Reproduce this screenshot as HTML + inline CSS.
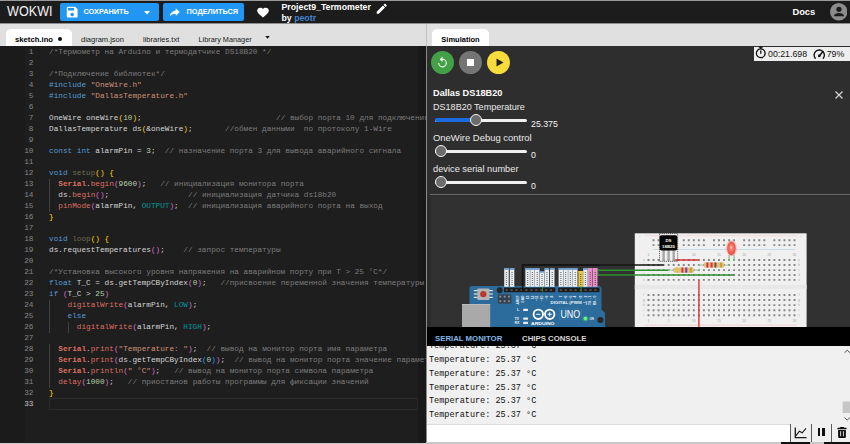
<!DOCTYPE html>
<html lang="ru">
<head>
<meta charset="utf-8">
<title>Project9_Termometer - Wokwi</title>
<style>
*{box-sizing:border-box;margin:0;padding:0}
html,body{width:850px;height:444px;overflow:hidden;background:#1e1e1e;font-family:"Liberation Sans",sans-serif}
.a{position:absolute;white-space:nowrap}
#hdr{position:absolute;left:0;top:0;width:850px;height:24px;background:#1c1c1c;color:#fff}
.btn{position:absolute;top:3px;height:18px;background:#2196f3;border-radius:2px}
.btn span{position:absolute;top:0;color:#fff;font-weight:bold;font-size:7.35px;line-height:18px;white-space:nowrap}
#tabsL{position:absolute;left:0;top:24px;width:426px;height:22px;background:#e0e0e0}
#tabsR{position:absolute;left:427px;top:24px;width:423px;height:22px;background:#e0e0e0}
.tab{position:absolute;top:5px;height:17px;font-size:7.5px;line-height:21px;color:#1a1a1a;white-space:nowrap}
.tab.act{background:#fff;border-radius:5px 5px 0 0;font-weight:bold;color:#000}
#ed{position:absolute;left:0;top:46px;width:426px;height:398px;background:#1e1e1e;overflow:hidden}
#ed .ln{position:absolute;left:0;width:33.5px;text-align:right;color:#858585;font:7.72px/11px "Liberation Mono",monospace;height:11px}
#ed .cl{position:absolute;left:49px;color:#d4d4d4;font:7.72px/11px "Liberation Mono",monospace;height:11px;white-space:pre}
#ed .ig{position:absolute;width:1px;background:#404040}
.c{color:#7c7c7c}.k{color:#569cd6}.s{color:#ce9178}.n{color:#b5cea8}.f{color:#dd6f60}.fb{color:#dd6f60;font-weight:bold}.t{color:#00979c}.m{color:#6e6c52}.y{color:#ffd700}.p{color:#da70d6}.b3{color:#179fff}
#split{position:absolute;left:426px;top:24px;width:1px;height:420px;background:#8a8a8a}
#sim{position:absolute;left:427px;top:46px;width:423px;height:281px;background:#2e2e2e;overflow:hidden}
.cb{position:absolute;top:4.800px;width:23px;height:23px;border-radius:50%}
#timer{position:absolute;left:327px;top:0.700px;width:96px;height:14.200px;background:#eeeeee;color:#111;font-size:8.8px;line-height:14.600px}
#chip{position:absolute;left:0;top:34px;width:423px;height:116px;background:#2e2e2e;color:#fff}
#chip:after{content:"";position:absolute;left:2.500px;right:0;bottom:1px;height:1px;background:#6a6a6a}
.lbl{position:absolute;left:6px;font-size:9.2px;line-height:12px;white-space:nowrap;color:#eaeaea}
.trk{position:absolute;left:8px;width:92px;height:3px;border-radius:2px;background:#efefef}
.fill{position:absolute;left:0;top:-0.300px;height:3.600px;border-radius:2px;background:#1a6ae0}
.thb{position:absolute;top:-4.5px;width:12px;height:12px;border-radius:50%;background:#6c6c6c;border:1.4px solid #f4f4f4}
.val{position:absolute;left:104px;font-size:8.8px;line-height:10px;color:#f4f4f4}
#canvas{position:absolute;left:0;top:150px;width:423px;height:131px;background:#313131;overflow:hidden}
#sbar{position:absolute;left:427px;top:327px;width:423px;height:19px;background:#000}
#sbar span{position:absolute;top:1.500px;font-weight:bold;font-size:7.8px;line-height:20px;white-space:nowrap}
#ser{position:absolute;left:427px;top:346px;width:423px;height:77.500px;background:#f0f0f0;overflow:hidden}
#ser div{position:absolute;left:2px;font:8.53px/13.9px "Liberation Mono",monospace;color:#101010;white-space:pre}
#inp{position:absolute;left:427px;top:423.500px;width:423px;height:18.500px;background:#f0f0f0}
#bot{position:absolute;left:0;top:442px;width:850px;height:2px;background:#c8c8c8}
</style>
</head>
<body>
<div id="hdr">
  <div class="a" style="left:0;top:0;width:850px;height:1px;background:#9a9a9a"></div><div class="a" style="left:0;top:23px;width:850px;height:1px;background:#8e8e8e"></div>
  <svg class="a" style="left:6px;top:3px" width="50" height="18" viewBox="0 0 50 18"><text x="1.100" y="12.500" font-family="Liberation Sans, sans-serif" font-size="13.800" fill="#f2f2f2" textLength="45.400" lengthAdjust="spacingAndGlyphs">WOKWI</text></svg>
  <div class="btn" style="left:60px;width:98.5px">
    <svg class="a" style="left:4.600px;top:2.200px" width="14.400" height="14.400" viewBox="0 0 24 24"><path fill="#fff" d="M15 9H5V5h10m-3 14a3 3 0 0 1-3-3 3 3 0 0 1 3-3 3 3 0 0 1 3 3 3 3 0 0 1-3 3m5-16H5a2 2 0 0 0-2 2v14a2 2 0 0 0 2 2h14a2 2 0 0 0 2-2V7l-4-4z"/></svg>
    <span style="left:23.5px">СОХРАНИТЬ</span>
    <svg class="a" style="left:84px;top:7.5px" width="6" height="4" viewBox="0 0 6 4"><path d="M0 0h6L3 3.6z" fill="#fff"/></svg>
  </div>
  <div class="btn" style="left:163px;width:81px">
    <svg class="a" style="left:5.300px;top:2.900px" width="13.300" height="13.300" viewBox="0 0 24 24"><path fill="#fff" d="M21 11l-7-7v4C7 9 4 14 3 19c2.500-3.500 6-5.100 11-5.100V18l7-7z"/></svg>
    <span style="left:23.500px">ПОДЕЛИТЬСЯ</span>
  </div>
  <svg class="a" style="left:255.500px;top:5.5px" width="14" height="13" viewBox="0 0 24 24" preserveAspectRatio="none"><path fill="#fff" d="M12 21.350l-1.450-1.320C5.400 15.360 2 12.270 2 8.500 2 5.410 4.420 3 7.500 3c1.740 0 3.410.810 4.500 2.080C13.090 3.810 14.760 3 16.500 3 19.580 3 22 5.410 22 8.500c0 3.770-3.400 6.860-8.550 11.530L12 21.350z"/></svg>
  <div class="a" style="left:281.5px;top:1.5px;font-size:8.75px;line-height:11px;font-weight:bold;color:#fff">Project9_Termometer</div>
  <div class="a" style="left:281.5px;top:12.5px;font-size:8.75px;line-height:11px;font-weight:bold;color:#fff">by <span style="color:#3f86cf">peotr</span></div>
  <svg class="a" style="left:374.500px;top:1.500px" width="13.500" height="13.500" viewBox="0 0 24 24"><path fill="#fff" d="M20.710 7.040c.390-.390.390-1.040 0-1.410l-2.340-2.340c-.370-.390-1.020-.390-1.410 0l-1.840 1.830 3.750 3.750M3 17.250V21h3.750L17.810 9.930l-3.750-3.750L3 17.250z"/></svg>
  <div class="a" style="left:792.400px;top:7.200px;font-size:9.350px;line-height:11px;font-weight:bold;color:#fff">Docs</div>
  <svg class="a" style="left:829.700px;top:3.200px" width="17.500" height="17.500" viewBox="0 0 24 24"><circle cx="12" cy="12" r="12" fill="#8c8c8c"/><circle cx="12.300" cy="8.600" r="3.600" fill="#1c1c1c"/><path fill="#1c1c1c" d="M5.400 18.200c0-3 3.400-4.400 6.900-4.400s6.900 1.400 6.900 4.400z"/></svg>
</div>
<div id="tabsL">
  <div class="tab act" style="left:5.5px;width:66.500px"><span class="a" style="left:9.500px;font-size:7.700px">sketch.ino</span><span class="a" style="left:52.600px;top:8.100px;width:4.400px;height:4.400px;border-radius:50%;background:#111"></span></div>
  <div class="tab" style="left:81px">diagram.json</div>
  <div class="tab" style="left:143px">libraries.txt</div>
  <div class="tab" style="left:198.500px;font-size:7.300px">Library Manager</div>
  <svg class="a" style="left:264.500px;top:12px" width="5" height="3" viewBox="0 0 6 4"><path d="M0 0h6L3 3.600z" fill="#111"/></svg>
</div>
<div id="tabsR">
  <div class="tab act" style="left:4.800px;width:57px"><span class="a" style="left:9.500px;top:-0.500px">Simulation</span></div>
</div>
<div id="ed">
<div class="a" style="left:0;top:0;width:25px;height:398px;background:#1b1b1b"></div>
<div class="a" style="left:417.500px;top:0;width:9px;height:398px;background:#191919"></div>
<div id="code" style="position:absolute;left:0;top:0;width:426px;height:398px">
<div class="ln" style="top:0.75px">1</div><div class="cl" style="top:0.75px"><span class="c">/*Термометр на Arduino и термодатчике DS18B20 */</span></div>
<div class="ln" style="top:11.75px">2</div><div class="cl" style="top:11.75px"></div>
<div class="ln" style="top:22.75px">3</div><div class="cl" style="top:22.75px"><span class="c">/*Подключение библиотек*/</span></div>
<div class="ln" style="top:33.75px">4</div><div class="cl" style="top:33.75px"><span class="k">#include</span> <span class="s">"OneWire.h"</span></div>
<div class="ln" style="top:44.75px">5</div><div class="cl" style="top:44.75px"><span class="k">#include</span> <span class="s">"DallasTemperature.h"</span></div>
<div class="ln" style="top:55.75px">6</div><div class="cl" style="top:55.75px"></div>
<div class="ln" style="top:66.75px">7</div><div class="cl" style="top:66.75px">OneWire oneWire<span class="y">(</span><span class="n">10</span><span class="y">)</span>;                             <span class="c">// выбор порта 10 для подключения датчика</span></div>
<div class="ln" style="top:77.75px">8</div><div class="cl" style="top:77.75px">DallasTemperature ds<span class="y">(</span>&amp;oneWire<span class="y">)</span>;       <span class="c">//обмен данными  по протоколу 1-Wire</span></div>
<div class="ln" style="top:88.75px">9</div><div class="cl" style="top:88.75px"></div>
<div class="ln" style="top:99.75px">10</div><div class="cl" style="top:99.75px"><span class="k">const</span> <span class="k">int</span> alarmPin = <span class="n">3</span>;  <span class="c">// назначение порта 3 для вывода аварийного сигнала</span></div>
<div class="ln" style="top:110.75px">11</div><div class="cl" style="top:110.75px"></div>
<div class="ln" style="top:121.75px">12</div><div class="cl" style="top:121.75px"><span class="k">void</span> <span class="m">setup</span><span class="y">()</span> <span class="y">{</span></div>
<div class="ln" style="top:132.75px">13</div><div class="cl" style="top:132.75px">  <span class="fb">Serial</span>.<span class="f">begin</span><span class="p">(</span><span class="n">9600</span><span class="p">)</span>;   <span class="c">// инициализация монитора порта</span></div>
<div class="ln" style="top:143.75px">14</div><div class="cl" style="top:143.75px">  ds.<span class="f">begin</span><span class="p">()</span>;                 <span class="c">// инициализация датчика ds18b20</span></div>
<div class="ln" style="top:154.75px">15</div><div class="cl" style="top:154.75px">  <span class="f">pinMode</span><span class="p">(</span>alarmPin, <span class="t">OUTPUT</span><span class="p">)</span>;  <span class="c">// инициализация аварийного порта на выход</span></div>
<div class="ln" style="top:165.75px">16</div><div class="cl" style="top:165.75px"><span class="y">}</span></div>
<div class="ln" style="top:176.75px">17</div><div class="cl" style="top:176.75px"></div>
<div class="ln" style="top:187.75px">18</div><div class="cl" style="top:187.75px"><span class="k">void</span> <span class="m">loop</span><span class="y">()</span> <span class="y">{</span></div>
<div class="ln" style="top:198.75px">19</div><div class="cl" style="top:198.75px">ds.requestTemperatures<span class="p">()</span>;    <span class="c">// запрос температуры</span></div>
<div class="ln" style="top:209.75px">20</div><div class="cl" style="top:209.75px"></div>
<div class="ln" style="top:220.75px">21</div><div class="cl" style="top:220.75px"><span class="c">/*Установка высокого уровня напряжения на аварийном порту при T &gt; 25 °C*/</span></div>
<div class="ln" style="top:231.75px">22</div><div class="cl" style="top:231.75px"><span class="k">float</span> T_C = ds.getTempCByIndex<span class="p">(</span><span class="n">0</span><span class="p">)</span>;   <span class="c">//присвоение переменной значения температуры</span></div>
<div class="ln" style="top:242.75px">23</div><div class="cl" style="top:242.75px"><span class="k">if</span> <span class="p">(</span>T_C &gt; <span class="n">25</span><span class="p">)</span></div>
<div class="ln" style="top:253.75px">24</div><div class="cl" style="top:253.75px">    <span class="f">digitalWrite</span><span class="p">(</span>alarmPin, <span class="t">LOW</span><span class="p">)</span>;</div>
<div class="ln" style="top:264.75px">25</div><div class="cl" style="top:264.75px">    <span class="k">else</span></div>
<div class="ln" style="top:275.75px">26</div><div class="cl" style="top:275.75px">      <span class="f">digitalWrite</span><span class="p">(</span>alarmPin, <span class="t">HIGH</span><span class="p">)</span>;</div>
<div class="ln" style="top:286.75px">27</div><div class="cl" style="top:286.75px"></div>
<div class="ln" style="top:297.75px">28</div><div class="cl" style="top:297.75px">  <span class="fb">Serial</span>.<span class="f">print</span><span class="p">(</span><span class="s">"Temperature: "</span><span class="p">)</span>;  <span class="c">// вывод на монитор порта имя параметра</span></div>
<div class="ln" style="top:308.75px">29</div><div class="cl" style="top:308.75px">  <span class="fb">Serial</span>.<span class="f">print</span><span class="p">(</span>ds.getTempCByIndex<span class="b3">(</span><span class="n">0</span><span class="b3">)</span><span class="p">)</span>;  <span class="c">// вывод на монитор порта значение параметра</span></div>
<div class="ln" style="top:319.75px">30</div><div class="cl" style="top:319.75px">  <span class="fb">Serial</span>.<span class="f">println</span><span class="p">(</span><span class="s">" °C"</span><span class="p">)</span>;   <span class="c">// вывод на монитор порта символа параметра</span></div>
<div class="ln" style="top:330.75px">31</div><div class="cl" style="top:330.75px">  <span class="f">delay</span><span class="p">(</span><span class="n">1000</span><span class="p">)</span>;   <span class="c">// приостанов работы программы для фиксации значений</span></div>
<div class="ln" style="top:341.75px">32</div><div class="cl" style="top:341.75px"><span class="y">}</span></div>
<div class="ln" style="top:352.75px;color:#c6c6c6">33</div><div class="cl" style="top:352.75px"></div>
<div class="ig" style="left:49.00px;top:132.75px;height:33.00px"></div>
<div class="ig" style="left:49.00px;top:253.75px;height:33.00px"></div>
<div class="ig" style="left:67.53px;top:275.75px;height:11.00px"></div>
<div class="ig" style="left:49.00px;top:297.75px;height:44.00px"></div>
</div>
<div class="a" style="left:49px;top:352px;width:369px;height:12px;border:1px solid #292929"></div>
</div>
<div id="split"><div class="a" style="left:0;top:0;width:1px;height:22px;background:#c2c2c2"></div></div>
<div id="sim">
  <div class="cb" style="left:4px;background:#43a047"><svg class="a" style="left:5px;top:5px" width="13" height="13" viewBox="0 0 24 24"><path fill="#fff" d="M12 5V1L7 6l5 5V7a6 6 0 0 1 6 6 6 6 0 0 1-6 6 6 6 0 0 1-6-6H4a8 8 0 0 0 8 8 8 8 0 0 0 8-8 8 8 0 0 0-8-8z"/></svg></div>
  <div class="cb" style="left:32px;background:#757575"><div class="a" style="left:8px;top:8px;width:7px;height:7px;background:#fff"></div></div>
  <div class="cb" style="left:60px;background:#f7dc3c"><svg class="a" style="left:8.5px;top:7px" width="8" height="9" viewBox="0 0 8 9"><path d="M0.500 0.500L7.500 4.500L0.500 8.500z" fill="#222"/></svg></div>
  <div id="timer">
    <svg class="a" style="left:1.300px;top:-0.300px" width="11.500" height="12.800" viewBox="0 0 23 25.600"><circle cx="11.500" cy="14.600" r="8.800" fill="none" stroke="#111" stroke-width="2.600"/><path d="M7.500 2.200h8M11.500 2.200v4M11.500 9v6.500" stroke="#111" stroke-width="2.600" fill="none"/></svg>
    <span class="a" style="left:14px;top:0">00:21.698</span>
    <svg class="a" style="left:59px;top:2px" width="12.500" height="10.500" viewBox="0 0 25 21"><path d="M5.200 19.500A10.300 10.300 0 1 1 19.800 19.500" fill="none" stroke="#111" stroke-width="2.700"/><path d="M12.500 13.800L19.500 5.300" stroke="#111" stroke-width="3" stroke-linecap="round"/><circle cx="12.500" cy="13.800" r="2.600" fill="#111"/></svg>
    <span class="a" style="left:72.700px;top:0">79%</span>
  </div>
  <div id="chip">
    <div class="lbl" style="top:7px;font-weight:bold;color:#fff">Dallas DS18B20</div>
    <svg class="a" style="left:407.500px;top:10.600px" width="8" height="8" viewBox="0 0 8 8"><path d="M0.500 0.500L7.500 7.500M7.500 0.500L0.500 7.500" stroke="#d4d4d4" stroke-width="1.200" fill="none"/></svg>
    <div class="lbl" style="top:20.500px;font-size:9.06px">DS18B20 Temperature</div>
    <div class="trk" style="top:38.700px"><div class="fill" style="width:42px"></div><div class="thb" style="left:34.500px"></div></div>
    <div class="val" style="top:38.500px">25.375</div>
    <div class="lbl" style="top:51.600px;font-size:9.45px">OneWire Debug control</div>
    <div class="trk" style="top:69.500px"><div class="thb" style="left:-0.500px"></div></div>
    <div class="val" style="top:70px">0</div>
    <div class="lbl" style="top:83px;font-size:9.27px">device serial number</div>
    <div class="trk" style="top:100.800px"><div class="thb" style="left:-0.500px"></div></div>
    <div class="val" style="top:101px">0</div>
  </div>
  <div id="canvas">
  <svg class="a" style="left:0;top:0" width="423" height="131" viewBox="427 196 423 131" font-family="Liberation Sans, sans-serif">
<defs>
<pattern id="h" x="647.650" y="0" width="5.035" height="5" patternUnits="userSpaceOnUse"><rect x="0" y="0" width="1.7" height="1.7" fill="#8f8f8f"/></pattern>
<radialGradient id="lg" cx="0.48" cy="0.45" r="0.6"><stop offset="0" stop-color="#ffe4de"/><stop offset="0.3" stop-color="#f47a6a"/><stop offset="1" stop-color="#e8443a"/></radialGradient>
</defs>
<rect x="427" y="196" width="4" height="131" fill="#2c2c2c"/>
<g>
<rect x="634.8" y="233.3" width="171.8" height="100" fill="#f0f0f0"/>
<rect x="634.8" y="284.8" width="171.8" height="4.2" fill="#e8e8e8"/>
<rect x="645" y="235.5" width="152" height="0.6" fill="#f3cccc"/>
<rect x="653" y="249" width="142" height="0.6" fill="#a9cfe8"/>
<rect x="645" y="324.8" width="152" height="0.6" fill="#f3bcbc"/>
<path fill="#858585" d="M652.58 239.35h1.9v1.9h-1.9zM657.62 239.35h1.9v1.9h-1.9zM662.65 239.35h1.9v1.9h-1.9zM667.69 239.35h1.9v1.9h-1.9zM672.72 239.35h1.9v1.9h-1.9zM682.79 239.35h1.9v1.9h-1.9zM687.83 239.35h1.9v1.9h-1.9zM692.87 239.35h1.9v1.9h-1.9zM697.90 239.35h1.9v1.9h-1.9zM702.93 239.35h1.9v1.9h-1.9zM713.00 239.35h1.9v1.9h-1.9zM718.04 239.35h1.9v1.9h-1.9zM723.07 239.35h1.9v1.9h-1.9zM728.11 239.35h1.9v1.9h-1.9zM733.14 239.35h1.9v1.9h-1.9zM743.21 239.35h1.9v1.9h-1.9zM748.25 239.35h1.9v1.9h-1.9zM753.28 239.35h1.9v1.9h-1.9zM758.32 239.35h1.9v1.9h-1.9zM763.36 239.35h1.9v1.9h-1.9zM773.42 239.35h1.9v1.9h-1.9zM778.46 239.35h1.9v1.9h-1.9zM783.49 239.35h1.9v1.9h-1.9zM788.53 239.35h1.9v1.9h-1.9zM793.56 239.35h1.9v1.9h-1.9zM652.58 244.15h1.9v1.9h-1.9zM657.62 244.15h1.9v1.9h-1.9zM662.65 244.15h1.9v1.9h-1.9zM667.69 244.15h1.9v1.9h-1.9zM672.72 244.15h1.9v1.9h-1.9zM682.79 244.15h1.9v1.9h-1.9zM687.83 244.15h1.9v1.9h-1.9zM692.87 244.15h1.9v1.9h-1.9zM697.90 244.15h1.9v1.9h-1.9zM702.93 244.15h1.9v1.9h-1.9zM713.00 244.15h1.9v1.9h-1.9zM718.04 244.15h1.9v1.9h-1.9zM723.07 244.15h1.9v1.9h-1.9zM728.11 244.15h1.9v1.9h-1.9zM733.14 244.15h1.9v1.9h-1.9zM743.21 244.15h1.9v1.9h-1.9zM748.25 244.15h1.9v1.9h-1.9zM753.28 244.15h1.9v1.9h-1.9zM758.32 244.15h1.9v1.9h-1.9zM763.36 244.15h1.9v1.9h-1.9zM773.42 244.15h1.9v1.9h-1.9zM778.46 244.15h1.9v1.9h-1.9zM783.49 244.15h1.9v1.9h-1.9zM788.53 244.15h1.9v1.9h-1.9zM793.56 244.15h1.9v1.9h-1.9zM647.55 259.05h1.9v1.9h-1.9zM652.58 259.05h1.9v1.9h-1.9zM657.62 259.05h1.9v1.9h-1.9zM662.65 259.05h1.9v1.9h-1.9zM667.69 259.05h1.9v1.9h-1.9zM672.72 259.05h1.9v1.9h-1.9zM677.76 259.05h1.9v1.9h-1.9zM682.79 259.05h1.9v1.9h-1.9zM687.83 259.05h1.9v1.9h-1.9zM692.87 259.05h1.9v1.9h-1.9zM697.90 259.05h1.9v1.9h-1.9zM702.93 259.05h1.9v1.9h-1.9zM707.97 259.05h1.9v1.9h-1.9zM713.00 259.05h1.9v1.9h-1.9zM718.04 259.05h1.9v1.9h-1.9zM723.07 259.05h1.9v1.9h-1.9zM728.11 259.05h1.9v1.9h-1.9zM733.14 259.05h1.9v1.9h-1.9zM738.18 259.05h1.9v1.9h-1.9zM743.21 259.05h1.9v1.9h-1.9zM748.25 259.05h1.9v1.9h-1.9zM753.28 259.05h1.9v1.9h-1.9zM758.32 259.05h1.9v1.9h-1.9zM763.36 259.05h1.9v1.9h-1.9zM768.39 259.05h1.9v1.9h-1.9zM773.42 259.05h1.9v1.9h-1.9zM778.46 259.05h1.9v1.9h-1.9zM783.49 259.05h1.9v1.9h-1.9zM788.53 259.05h1.9v1.9h-1.9zM793.56 259.05h1.9v1.9h-1.9zM647.55 264.10h1.9v1.9h-1.9zM652.58 264.10h1.9v1.9h-1.9zM657.62 264.10h1.9v1.9h-1.9zM662.65 264.10h1.9v1.9h-1.9zM667.69 264.10h1.9v1.9h-1.9zM672.72 264.10h1.9v1.9h-1.9zM677.76 264.10h1.9v1.9h-1.9zM682.79 264.10h1.9v1.9h-1.9zM687.83 264.10h1.9v1.9h-1.9zM692.87 264.10h1.9v1.9h-1.9zM697.90 264.10h1.9v1.9h-1.9zM702.93 264.10h1.9v1.9h-1.9zM707.97 264.10h1.9v1.9h-1.9zM713.00 264.10h1.9v1.9h-1.9zM718.04 264.10h1.9v1.9h-1.9zM723.07 264.10h1.9v1.9h-1.9zM728.11 264.10h1.9v1.9h-1.9zM733.14 264.10h1.9v1.9h-1.9zM738.18 264.10h1.9v1.9h-1.9zM743.21 264.10h1.9v1.9h-1.9zM748.25 264.10h1.9v1.9h-1.9zM753.28 264.10h1.9v1.9h-1.9zM758.32 264.10h1.9v1.9h-1.9zM763.36 264.10h1.9v1.9h-1.9zM768.39 264.10h1.9v1.9h-1.9zM773.42 264.10h1.9v1.9h-1.9zM778.46 264.10h1.9v1.9h-1.9zM783.49 264.10h1.9v1.9h-1.9zM788.53 264.10h1.9v1.9h-1.9zM793.56 264.10h1.9v1.9h-1.9zM647.55 269.15h1.9v1.9h-1.9zM652.58 269.15h1.9v1.9h-1.9zM657.62 269.15h1.9v1.9h-1.9zM662.65 269.15h1.9v1.9h-1.9zM667.69 269.15h1.9v1.9h-1.9zM672.72 269.15h1.9v1.9h-1.9zM677.76 269.15h1.9v1.9h-1.9zM682.79 269.15h1.9v1.9h-1.9zM687.83 269.15h1.9v1.9h-1.9zM692.87 269.15h1.9v1.9h-1.9zM697.90 269.15h1.9v1.9h-1.9zM702.93 269.15h1.9v1.9h-1.9zM707.97 269.15h1.9v1.9h-1.9zM713.00 269.15h1.9v1.9h-1.9zM718.04 269.15h1.9v1.9h-1.9zM723.07 269.15h1.9v1.9h-1.9zM728.11 269.15h1.9v1.9h-1.9zM733.14 269.15h1.9v1.9h-1.9zM738.18 269.15h1.9v1.9h-1.9zM743.21 269.15h1.9v1.9h-1.9zM748.25 269.15h1.9v1.9h-1.9zM753.28 269.15h1.9v1.9h-1.9zM758.32 269.15h1.9v1.9h-1.9zM763.36 269.15h1.9v1.9h-1.9zM768.39 269.15h1.9v1.9h-1.9zM773.42 269.15h1.9v1.9h-1.9zM778.46 269.15h1.9v1.9h-1.9zM783.49 269.15h1.9v1.9h-1.9zM788.53 269.15h1.9v1.9h-1.9zM793.56 269.15h1.9v1.9h-1.9zM647.55 274.05h1.9v1.9h-1.9zM652.58 274.05h1.9v1.9h-1.9zM657.62 274.05h1.9v1.9h-1.9zM662.65 274.05h1.9v1.9h-1.9zM667.69 274.05h1.9v1.9h-1.9zM672.72 274.05h1.9v1.9h-1.9zM677.76 274.05h1.9v1.9h-1.9zM682.79 274.05h1.9v1.9h-1.9zM687.83 274.05h1.9v1.9h-1.9zM692.87 274.05h1.9v1.9h-1.9zM697.90 274.05h1.9v1.9h-1.9zM702.93 274.05h1.9v1.9h-1.9zM707.97 274.05h1.9v1.9h-1.9zM713.00 274.05h1.9v1.9h-1.9zM718.04 274.05h1.9v1.9h-1.9zM723.07 274.05h1.9v1.9h-1.9zM728.11 274.05h1.9v1.9h-1.9zM733.14 274.05h1.9v1.9h-1.9zM738.18 274.05h1.9v1.9h-1.9zM743.21 274.05h1.9v1.9h-1.9zM748.25 274.05h1.9v1.9h-1.9zM753.28 274.05h1.9v1.9h-1.9zM758.32 274.05h1.9v1.9h-1.9zM763.36 274.05h1.9v1.9h-1.9zM768.39 274.05h1.9v1.9h-1.9zM773.42 274.05h1.9v1.9h-1.9zM778.46 274.05h1.9v1.9h-1.9zM783.49 274.05h1.9v1.9h-1.9zM788.53 274.05h1.9v1.9h-1.9zM793.56 274.05h1.9v1.9h-1.9zM647.55 278.95h1.9v1.9h-1.9zM652.58 278.95h1.9v1.9h-1.9zM657.62 278.95h1.9v1.9h-1.9zM662.65 278.95h1.9v1.9h-1.9zM667.69 278.95h1.9v1.9h-1.9zM672.72 278.95h1.9v1.9h-1.9zM677.76 278.95h1.9v1.9h-1.9zM682.79 278.95h1.9v1.9h-1.9zM687.83 278.95h1.9v1.9h-1.9zM692.87 278.95h1.9v1.9h-1.9zM697.90 278.95h1.9v1.9h-1.9zM702.93 278.95h1.9v1.9h-1.9zM707.97 278.95h1.9v1.9h-1.9zM713.00 278.95h1.9v1.9h-1.9zM718.04 278.95h1.9v1.9h-1.9zM723.07 278.95h1.9v1.9h-1.9zM728.11 278.95h1.9v1.9h-1.9zM733.14 278.95h1.9v1.9h-1.9zM738.18 278.95h1.9v1.9h-1.9zM743.21 278.95h1.9v1.9h-1.9zM748.25 278.95h1.9v1.9h-1.9zM753.28 278.95h1.9v1.9h-1.9zM758.32 278.95h1.9v1.9h-1.9zM763.36 278.95h1.9v1.9h-1.9zM768.39 278.95h1.9v1.9h-1.9zM773.42 278.95h1.9v1.9h-1.9zM778.46 278.95h1.9v1.9h-1.9zM783.49 278.95h1.9v1.9h-1.9zM788.53 278.95h1.9v1.9h-1.9zM793.56 278.95h1.9v1.9h-1.9zM647.55 294.05h1.9v1.9h-1.9zM652.58 294.05h1.9v1.9h-1.9zM657.62 294.05h1.9v1.9h-1.9zM662.65 294.05h1.9v1.9h-1.9zM667.69 294.05h1.9v1.9h-1.9zM672.72 294.05h1.9v1.9h-1.9zM677.76 294.05h1.9v1.9h-1.9zM682.79 294.05h1.9v1.9h-1.9zM687.83 294.05h1.9v1.9h-1.9zM692.87 294.05h1.9v1.9h-1.9zM697.90 294.05h1.9v1.9h-1.9zM702.93 294.05h1.9v1.9h-1.9zM707.97 294.05h1.9v1.9h-1.9zM713.00 294.05h1.9v1.9h-1.9zM718.04 294.05h1.9v1.9h-1.9zM723.07 294.05h1.9v1.9h-1.9zM728.11 294.05h1.9v1.9h-1.9zM733.14 294.05h1.9v1.9h-1.9zM738.18 294.05h1.9v1.9h-1.9zM743.21 294.05h1.9v1.9h-1.9zM748.25 294.05h1.9v1.9h-1.9zM753.28 294.05h1.9v1.9h-1.9zM758.32 294.05h1.9v1.9h-1.9zM763.36 294.05h1.9v1.9h-1.9zM768.39 294.05h1.9v1.9h-1.9zM773.42 294.05h1.9v1.9h-1.9zM778.46 294.05h1.9v1.9h-1.9zM783.49 294.05h1.9v1.9h-1.9zM788.53 294.05h1.9v1.9h-1.9zM793.56 294.05h1.9v1.9h-1.9zM647.55 299.10h1.9v1.9h-1.9zM652.58 299.10h1.9v1.9h-1.9zM657.62 299.10h1.9v1.9h-1.9zM662.65 299.10h1.9v1.9h-1.9zM667.69 299.10h1.9v1.9h-1.9zM672.72 299.10h1.9v1.9h-1.9zM677.76 299.10h1.9v1.9h-1.9zM682.79 299.10h1.9v1.9h-1.9zM687.83 299.10h1.9v1.9h-1.9zM692.87 299.10h1.9v1.9h-1.9zM697.90 299.10h1.9v1.9h-1.9zM702.93 299.10h1.9v1.9h-1.9zM707.97 299.10h1.9v1.9h-1.9zM713.00 299.10h1.9v1.9h-1.9zM718.04 299.10h1.9v1.9h-1.9zM723.07 299.10h1.9v1.9h-1.9zM728.11 299.10h1.9v1.9h-1.9zM733.14 299.10h1.9v1.9h-1.9zM738.18 299.10h1.9v1.9h-1.9zM743.21 299.10h1.9v1.9h-1.9zM748.25 299.10h1.9v1.9h-1.9zM753.28 299.10h1.9v1.9h-1.9zM758.32 299.10h1.9v1.9h-1.9zM763.36 299.10h1.9v1.9h-1.9zM768.39 299.10h1.9v1.9h-1.9zM773.42 299.10h1.9v1.9h-1.9zM778.46 299.10h1.9v1.9h-1.9zM783.49 299.10h1.9v1.9h-1.9zM788.53 299.10h1.9v1.9h-1.9zM793.56 299.10h1.9v1.9h-1.9zM647.55 304.15h1.9v1.9h-1.9zM652.58 304.15h1.9v1.9h-1.9zM657.62 304.15h1.9v1.9h-1.9zM662.65 304.15h1.9v1.9h-1.9zM667.69 304.15h1.9v1.9h-1.9zM672.72 304.15h1.9v1.9h-1.9zM677.76 304.15h1.9v1.9h-1.9zM682.79 304.15h1.9v1.9h-1.9zM687.83 304.15h1.9v1.9h-1.9zM692.87 304.15h1.9v1.9h-1.9zM697.90 304.15h1.9v1.9h-1.9zM702.93 304.15h1.9v1.9h-1.9zM707.97 304.15h1.9v1.9h-1.9zM713.00 304.15h1.9v1.9h-1.9zM718.04 304.15h1.9v1.9h-1.9zM723.07 304.15h1.9v1.9h-1.9zM728.11 304.15h1.9v1.9h-1.9zM733.14 304.15h1.9v1.9h-1.9zM738.18 304.15h1.9v1.9h-1.9zM743.21 304.15h1.9v1.9h-1.9zM748.25 304.15h1.9v1.9h-1.9zM753.28 304.15h1.9v1.9h-1.9zM758.32 304.15h1.9v1.9h-1.9zM763.36 304.15h1.9v1.9h-1.9zM768.39 304.15h1.9v1.9h-1.9zM773.42 304.15h1.9v1.9h-1.9zM778.46 304.15h1.9v1.9h-1.9zM783.49 304.15h1.9v1.9h-1.9zM788.53 304.15h1.9v1.9h-1.9zM793.56 304.15h1.9v1.9h-1.9zM647.55 309.25h1.9v1.9h-1.9zM652.58 309.25h1.9v1.9h-1.9zM657.62 309.25h1.9v1.9h-1.9zM662.65 309.25h1.9v1.9h-1.9zM667.69 309.25h1.9v1.9h-1.9zM672.72 309.25h1.9v1.9h-1.9zM677.76 309.25h1.9v1.9h-1.9zM682.79 309.25h1.9v1.9h-1.9zM687.83 309.25h1.9v1.9h-1.9zM692.87 309.25h1.9v1.9h-1.9zM697.90 309.25h1.9v1.9h-1.9zM702.93 309.25h1.9v1.9h-1.9zM707.97 309.25h1.9v1.9h-1.9zM713.00 309.25h1.9v1.9h-1.9zM718.04 309.25h1.9v1.9h-1.9zM723.07 309.25h1.9v1.9h-1.9zM728.11 309.25h1.9v1.9h-1.9zM733.14 309.25h1.9v1.9h-1.9zM738.18 309.25h1.9v1.9h-1.9zM743.21 309.25h1.9v1.9h-1.9zM748.25 309.25h1.9v1.9h-1.9zM753.28 309.25h1.9v1.9h-1.9zM758.32 309.25h1.9v1.9h-1.9zM763.36 309.25h1.9v1.9h-1.9zM768.39 309.25h1.9v1.9h-1.9zM773.42 309.25h1.9v1.9h-1.9zM778.46 309.25h1.9v1.9h-1.9zM783.49 309.25h1.9v1.9h-1.9zM788.53 309.25h1.9v1.9h-1.9zM793.56 309.25h1.9v1.9h-1.9zM647.55 314.35h1.9v1.9h-1.9zM652.58 314.35h1.9v1.9h-1.9zM657.62 314.35h1.9v1.9h-1.9zM662.65 314.35h1.9v1.9h-1.9zM667.69 314.35h1.9v1.9h-1.9zM672.72 314.35h1.9v1.9h-1.9zM677.76 314.35h1.9v1.9h-1.9zM682.79 314.35h1.9v1.9h-1.9zM687.83 314.35h1.9v1.9h-1.9zM692.87 314.35h1.9v1.9h-1.9zM697.90 314.35h1.9v1.9h-1.9zM702.93 314.35h1.9v1.9h-1.9zM707.97 314.35h1.9v1.9h-1.9zM713.00 314.35h1.9v1.9h-1.9zM718.04 314.35h1.9v1.9h-1.9zM723.07 314.35h1.9v1.9h-1.9zM728.11 314.35h1.9v1.9h-1.9zM733.14 314.35h1.9v1.9h-1.9zM738.18 314.35h1.9v1.9h-1.9zM743.21 314.35h1.9v1.9h-1.9zM748.25 314.35h1.9v1.9h-1.9zM753.28 314.35h1.9v1.9h-1.9zM758.32 314.35h1.9v1.9h-1.9zM763.36 314.35h1.9v1.9h-1.9zM768.39 314.35h1.9v1.9h-1.9zM773.42 314.35h1.9v1.9h-1.9zM778.46 314.35h1.9v1.9h-1.9zM783.49 314.35h1.9v1.9h-1.9zM788.53 314.35h1.9v1.9h-1.9zM793.56 314.35h1.9v1.9h-1.9z"/>
<text x="648.5" y="255.9" font-size="3.2" fill="#9c9c9c" text-anchor="middle">1</text>
<text x="668.6" y="255.9" font-size="3.2" fill="#9c9c9c" text-anchor="middle">5</text>
<text x="693.8" y="255.9" font-size="3.2" fill="#9c9c9c" text-anchor="middle">10</text>
<text x="719.0" y="255.9" font-size="3.2" fill="#9c9c9c" text-anchor="middle">15</text>
<text x="744.2" y="255.9" font-size="3.2" fill="#9c9c9c" text-anchor="middle">20</text>
<text x="769.3" y="255.9" font-size="3.2" fill="#9c9c9c" text-anchor="middle">25</text>
<text x="794.5" y="255.9" font-size="3.2" fill="#9c9c9c" text-anchor="middle">30</text>
<text x="648.5" y="321.6" font-size="3.2" fill="#9c9c9c" text-anchor="middle">1</text>
<text x="668.6" y="321.6" font-size="3.2" fill="#9c9c9c" text-anchor="middle">5</text>
<text x="693.8" y="321.6" font-size="3.2" fill="#9c9c9c" text-anchor="middle">10</text>
<text x="719.0" y="321.6" font-size="3.2" fill="#9c9c9c" text-anchor="middle">15</text>
<text x="744.2" y="321.6" font-size="3.2" fill="#9c9c9c" text-anchor="middle">20</text>
<text x="769.3" y="321.6" font-size="3.2" fill="#9c9c9c" text-anchor="middle">25</text>
<text x="794.5" y="321.6" font-size="3.2" fill="#9c9c9c" text-anchor="middle">30</text>
<text x="643.8" y="261.0" font-size="3.2" fill="#a4a4a4" text-anchor="middle">a</text>
<text x="643.8" y="266.1" font-size="3.2" fill="#a4a4a4" text-anchor="middle">b</text>
<text x="643.8" y="271.1" font-size="3.2" fill="#a4a4a4" text-anchor="middle">c</text>
<text x="643.8" y="276.0" font-size="3.2" fill="#a4a4a4" text-anchor="middle">d</text>
<text x="643.8" y="280.9" font-size="3.2" fill="#a4a4a4" text-anchor="middle">e</text>
<text x="643.8" y="296.0" font-size="3.2" fill="#a4a4a4" text-anchor="middle">f</text>
<text x="643.8" y="301.1" font-size="3.2" fill="#a4a4a4" text-anchor="middle">g</text>
<text x="643.8" y="306.1" font-size="3.2" fill="#a4a4a4" text-anchor="middle">h</text>
<text x="643.8" y="311.2" font-size="3.2" fill="#a4a4a4" text-anchor="middle">i</text>
<text x="643.8" y="316.3" font-size="3.2" fill="#a4a4a4" text-anchor="middle">j</text>
<text x="799.2" y="261.0" font-size="3.2" fill="#a4a4a4" text-anchor="middle">a</text>
<text x="799.2" y="266.1" font-size="3.2" fill="#a4a4a4" text-anchor="middle">b</text>
<text x="799.2" y="271.1" font-size="3.2" fill="#a4a4a4" text-anchor="middle">c</text>
<text x="799.2" y="276.0" font-size="3.2" fill="#a4a4a4" text-anchor="middle">d</text>
<text x="799.2" y="280.9" font-size="3.2" fill="#a4a4a4" text-anchor="middle">e</text>
<text x="799.2" y="296.0" font-size="3.2" fill="#a4a4a4" text-anchor="middle">f</text>
<text x="799.2" y="301.1" font-size="3.2" fill="#a4a4a4" text-anchor="middle">g</text>
<text x="799.2" y="306.1" font-size="3.2" fill="#a4a4a4" text-anchor="middle">h</text>
<text x="799.2" y="311.2" font-size="3.2" fill="#a4a4a4" text-anchor="middle">i</text>
<text x="799.2" y="316.3" font-size="3.2" fill="#a4a4a4" text-anchor="middle">j</text>
<text x="640" y="237" font-size="3" fill="#e8a0a0" text-anchor="middle">+</text><text x="801" y="237" font-size="3" fill="#e8a0a0" text-anchor="middle">+</text>
</g>
<path d="M522.6 291V265H663.6" stroke="#151515" stroke-width="1.45" fill="none"/>
<path d="M598 270.2H668.6" stroke="#2f8f2f" stroke-width="1.5" fill="none"/>
<path d="M598 274.9H734.1" stroke="#2f8f2f" stroke-width="1.5" fill="none"/>
<path d="M598 269.6v6" stroke="#2f8f2f" stroke-width="1" fill="none"/>
<path d="M673.7 260H698.9" stroke="#d93636" stroke-width="1.5" fill="none"/>
<path d="M698.9 279.9V328" stroke="#e83030" stroke-width="1.4" fill="none"/>
<path d="M668.6 270.1H698.9" stroke="#aaa" stroke-width="0.8"/>
<rect x="673.4" y="267.5" width="20.6" height="5.2" rx="1.6" fill="#d9bf8e"/>
<rect x="676.6" y="267.5" width="2" height="5.2" fill="#e8c33a"/>
<rect x="681.4" y="267.5" width="2" height="5.2" fill="#e03030"/>
<rect x="685.2" y="267.5" width="2" height="5.2" fill="#7a3fa0"/>
<rect x="689.9" y="267.5" width="2" height="5.2" fill="#d4a017"/>
<circle cx="668.6" cy="270.1" r="0.9" fill="#5fd35f"/>
<circle cx="698.9" cy="270.1" r="0.9" fill="#5fd35f"/>
<path d="M698.9 265.1H729.1" stroke="#aaa" stroke-width="0.8"/>
<rect x="703.6" y="262.4" width="20.6" height="5.2" rx="1.6" fill="#d9bf8e"/>
<rect x="706.4" y="262.4" width="2" height="5.2" fill="#e03030"/>
<rect x="710.6" y="262.4" width="2" height="5.2" fill="#e03030"/>
<rect x="714.4" y="262.4" width="2" height="5.2" fill="#8a4a2a"/>
<rect x="720.1" y="262.4" width="2" height="5.2" fill="#d4a017"/>
<circle cx="698.9" cy="265.1" r="0.9" fill="#5fd35f"/>
<circle cx="729.1" cy="265.1" r="0.9" fill="#5fd35f"/>
<g>
<rect x="662.4" y="250" width="2.4" height="10.6" fill="#a8a8a8"/>
<rect x="667.4" y="250" width="2.4" height="10.6" fill="#a8a8a8"/>
<rect x="672.5" y="250" width="2.4" height="10.6" fill="#a8a8a8"/>
<rect x="659.6" y="235.2" width="17.8" height="15.3" rx="2" fill="#050505"/>
<text x="668.5" y="242.2" font-size="4.4" font-weight="bold" fill="#fafafa" text-anchor="middle">DS</text>
<text x="668.5" y="247.9" font-size="4.4" font-weight="bold" fill="#fafafa" text-anchor="middle">18B20</text>
<rect x="659.5" y="233.6" width="18.2" height="27.8" fill="none" stroke="#111" stroke-width="0.6" stroke-dasharray="1.2 0.9"/>
</g>
<g>
<path d="M729.1 255V260M734.1 255V260" stroke="#5a9a5a" stroke-width="0.8"/>
<circle cx="729.1" cy="260" r="0.9" fill="#5fd35f"/><circle cx="734.1" cy="260" r="0.9" fill="#5fd35f"/>
<ellipse cx="731.4" cy="248.2" rx="5.6" ry="8" fill="#ff6a5a" opacity="0.3"/>
<ellipse cx="731.4" cy="248.4" rx="4.2" ry="6.8" fill="url(#lg)"/>
</g>
<g>
<path d="M471 286H599.5l2 2V309.5l3.5 3.5V328H469.5V287.5z" fill="#2c6c9c"/>
<rect x="462" y="304" width="28.2" height="24" fill="#a9a9a9"/>
<rect x="462" y="304" width="28.2" height="1" fill="#bcbcbc"/>
<rect x="504" y="287.6" width="51.3" height="4.6" fill="#1c1c1c"/><rect x="558.2" y="287.6" width="41.3" height="4.6" fill="#1c1c1c"/>
<path d="M505.6 288.9h2v2h-2zM510.6 288.9h2v2h-2zM515.5 288.9h2v2h-2zM520.5 288.9h2v2h-2zM525.4 288.9h2v2h-2zM530.4 288.9h2v2h-2zM535.3 288.9h2v2h-2zM540.2 288.9h2v2h-2zM545.2 288.9h2v2h-2zM550.1 288.9h2v2h-2zM559.8 288.9h2v2h-2zM564.8 288.9h2v2h-2zM569.7 288.9h2v2h-2zM574.6 288.9h2v2h-2zM579.6 288.9h2v2h-2zM584.5 288.9h2v2h-2zM589.5 288.9h2v2h-2zM594.4 288.9h2v2h-2z" fill="#4c4c4c"/>
<rect x="504.2" y="268.2" width="4.5" height="18.6" fill="#e9eef3"/>
<rect x="504.2" y="268.2" width="4.5" height="1.6" fill="#5b94c9"/>
<path d="M506.45 272V285" stroke="#222" stroke-width="1.2" stroke-dasharray="1 1" opacity="0.6"/>
<rect x="509.8" y="268.2" width="4.5" height="18.6" fill="#e9eef3"/>
<rect x="509.8" y="268.2" width="4.5" height="1.6" fill="#5b94c9"/>
<path d="M512.05 272V285" stroke="#222" stroke-width="1.2" stroke-dasharray="1 1" opacity="0.6"/>
<rect x="525.4" y="268.2" width="4.5" height="18.6" fill="#e9eef3"/>
<rect x="525.4" y="268.2" width="4.5" height="1.6" fill="#5b94c9"/>
<path d="M527.65 272V285" stroke="#222" stroke-width="1.2" stroke-dasharray="1 1" opacity="0.6"/>
<rect x="530.2" y="268.2" width="4.5" height="18.6" fill="#e9eef3"/>
<rect x="530.2" y="268.2" width="4.5" height="1.6" fill="#5b94c9"/>
<path d="M532.45 272V285" stroke="#222" stroke-width="1.2" stroke-dasharray="1 1" opacity="0.6"/>
<rect x="535.0" y="268.2" width="4.5" height="18.6" fill="#e9eef3"/>
<rect x="535.0" y="268.2" width="4.5" height="1.6" fill="#5b94c9"/>
<path d="M537.25 272V285" stroke="#222" stroke-width="1.2" stroke-dasharray="1 1" opacity="0.6"/>
<rect x="539.8" y="271.0" width="4.5" height="15.8" fill="#e9eef3"/>
<rect x="539.8" y="271.0" width="4.5" height="1.6" fill="#5b94c9"/>
<path d="M542.05 274V285" stroke="#222" stroke-width="1.2" stroke-dasharray="1 1" opacity="0.6"/>
<rect x="544.6" y="268.2" width="4.5" height="18.6" fill="#e9eef3"/>
<rect x="544.6" y="268.2" width="4.5" height="1.6" fill="#5b94c9"/>
<path d="M546.85 272V285" stroke="#222" stroke-width="1.2" stroke-dasharray="1 1" opacity="0.6"/>
<rect x="550.0" y="268.2" width="4.5" height="18.6" fill="#e9eef3"/>
<rect x="550.0" y="268.2" width="4.5" height="1.6" fill="#5b94c9"/>
<path d="M552.25 272V285" stroke="#222" stroke-width="1.2" stroke-dasharray="1 1" opacity="0.6"/>
<rect x="558.6" y="268.2" width="4.5" height="18.6" fill="#e9eef3"/>
<rect x="558.6" y="268.2" width="4.5" height="1.6" fill="#5b94c9"/>
<path d="M560.85 272V285" stroke="#222" stroke-width="1.2" stroke-dasharray="1 1" opacity="0.6"/>
<rect x="563.4" y="268.2" width="4.5" height="18.6" fill="#e9eef3"/>
<rect x="563.4" y="268.2" width="4.5" height="1.6" fill="#5b94c9"/>
<path d="M565.65 272V285" stroke="#222" stroke-width="1.2" stroke-dasharray="1 1" opacity="0.6"/>
<rect x="568.2" y="268.2" width="4.5" height="18.6" fill="#e9eef3"/>
<rect x="568.2" y="268.2" width="4.5" height="1.6" fill="#5b94c9"/>
<path d="M570.45 272V285" stroke="#222" stroke-width="1.2" stroke-dasharray="1 1" opacity="0.6"/>
<rect x="573.0" y="268.2" width="4.5" height="18.6" fill="#e9eef3"/>
<rect x="573.0" y="268.2" width="4.5" height="1.6" fill="#5b94c9"/>
<path d="M575.25 272V285" stroke="#222" stroke-width="1.2" stroke-dasharray="1 1" opacity="0.6"/>
<rect x="578.4" y="271.0" width="4.5" height="15.8" fill="#e9c73a"/>
<rect x="578.4" y="271.0" width="4.5" height="1.6" fill="#e9c73a"/>
<path d="M580.65 274V285" stroke="#222" stroke-width="1.2" stroke-dasharray="1 1" opacity="0.6"/>
<rect x="583.2" y="268.2" width="4.5" height="18.6" fill="#e9eef3"/>
<rect x="583.2" y="268.2" width="4.5" height="1.6" fill="#5b94c9"/>
<path d="M585.45 272V285" stroke="#222" stroke-width="1.2" stroke-dasharray="1 1" opacity="0.6"/>
<rect x="588.0" y="268.2" width="4.5" height="18.6" fill="#e78fc6"/>
<rect x="588.0" y="268.2" width="4.5" height="1.6" fill="#e78fc6"/>
<path d="M590.25 272V285" stroke="#222" stroke-width="1.2" stroke-dasharray="1 1" opacity="0.6"/>
<rect x="593.0" y="268.2" width="4.5" height="18.6" fill="#e78fc6"/>
<rect x="593.0" y="268.2" width="4.5" height="1.6" fill="#e78fc6"/>
<path d="M595.25 272V285" stroke="#222" stroke-width="1.2" stroke-dasharray="1 1" opacity="0.6"/>
<path d="M522.6 291V265H600" stroke="#151515" stroke-width="1.45" fill="none"/>
<path d="M542.6 286.5v5.5M581.2 286.5v5.5" stroke="#2f8f2f" stroke-width="0.9"/>
<rect x="473.8" y="290" width="19" height="1.2" fill="#e0e0e0"/><rect x="473.8" y="293.4" width="19" height="1.2" fill="#e0e0e0"/><rect x="473.8" y="296.8" width="19" height="1.2" fill="#e0e0e0"/>
<rect x="477.4" y="288.4" width="12" height="11.6" rx="0.8" fill="#b4b4b4"/><circle cx="483.3" cy="294.1" r="3.2" fill="#b83a2c"/>
<circle cx="499.7" cy="290.2" r="3" fill="#262626"/><circle cx="600.4" cy="320" r="3" fill="#262626"/>
<rect x="497.8" y="294.4" width="13.5" height="9.2" fill="#34424f"/>
<rect x="499.4" y="295.7" width="1.8" height="1.8" fill="#8d9398"/>
<rect x="499.4" y="300.3" width="1.8" height="1.8" fill="#8d9398"/>
<rect x="503.7" y="295.7" width="1.8" height="1.8" fill="#8d9398"/>
<rect x="503.7" y="300.3" width="1.8" height="1.8" fill="#8d9398"/>
<rect x="508.0" y="295.7" width="1.8" height="1.8" fill="#8d9398"/>
<rect x="508.0" y="300.3" width="1.8" height="1.8" fill="#8d9398"/>
<text transform="translate(518.6 295.6) rotate(-90)" text-anchor="end" font-size="3.3" font-weight="bold" fill="#e8eef4">AREF</text>
<text transform="translate(523.5 295.6) rotate(-90)" text-anchor="end" font-size="3.3" font-weight="bold" fill="#e8eef4">GND</text>
<text transform="translate(528.7 295.6) rotate(-90)" text-anchor="end" font-size="3.3" font-weight="bold" fill="#e8eef4">13</text>
<text transform="translate(533.5 295.6) rotate(-90)" text-anchor="end" font-size="3.3" font-weight="bold" fill="#e8eef4">12</text>
<text transform="translate(538.3 295.6) rotate(-90)" text-anchor="end" font-size="3.3" font-weight="bold" fill="#e8eef4">~11</text>
<text transform="translate(543.1 295.6) rotate(-90)" text-anchor="end" font-size="3.3" font-weight="bold" fill="#e8eef4">~10</text>
<text transform="translate(547.9 295.6) rotate(-90)" text-anchor="end" font-size="3.3" font-weight="bold" fill="#e8eef4">~9</text>
<text transform="translate(553.3 295.6) rotate(-90)" text-anchor="end" font-size="3.3" font-weight="bold" fill="#e8eef4">8</text>
<text transform="translate(561.9 295.6) rotate(-90)" text-anchor="end" font-size="3.3" font-weight="bold" fill="#e8eef4">7</text>
<text transform="translate(566.7 295.6) rotate(-90)" text-anchor="end" font-size="3.3" font-weight="bold" fill="#e8eef4">~6</text>
<text transform="translate(571.5 295.6) rotate(-90)" text-anchor="end" font-size="3.3" font-weight="bold" fill="#e8eef4">~5</text>
<text transform="translate(576.3 295.6) rotate(-90)" text-anchor="end" font-size="3.3" font-weight="bold" fill="#e8eef4">4</text>
<text transform="translate(581.7 295.6) rotate(-90)" text-anchor="end" font-size="3.3" font-weight="bold" fill="#e8eef4">~3</text>
<text transform="translate(586.5 295.6) rotate(-90)" text-anchor="end" font-size="3.3" font-weight="bold" fill="#e8eef4">2</text>
<text transform="translate(591.3 295.6) rotate(-90)" text-anchor="end" font-size="3.3" font-weight="bold" fill="#e8eef4">TX→1</text>
<text transform="translate(596.3 295.6) rotate(-90)" text-anchor="end" font-size="3.3" font-weight="bold" fill="#e8eef4">RX←0</text>
<text x="550.6" y="304.2" font-size="2.9" font-weight="bold" fill="#e8eef4" textLength="36.5" lengthAdjust="spacingAndGlyphs">DIGITAL (PWM ~)</text>
<text x="517" y="311.2" font-size="3.6" font-weight="bold" fill="#e8eef4">L</text><rect x="523.2" y="308.7" width="4.8" height="2.3" rx="0.5" fill="#ececec"/>
<text x="514.4" y="319.9" font-size="3.6" font-weight="bold" fill="#e8eef4">TX</text><rect x="523.2" y="317.4" width="4.8" height="2.3" rx="0.5" fill="#ececec"/>
<text x="514.4" y="324.3" font-size="3.6" font-weight="bold" fill="#e8eef4">RX</text><rect x="523.2" y="321.7" width="4.8" height="2.3" rx="0.5" fill="#ececec"/>
<g fill="none" stroke="#fff" stroke-width="1.9"><circle cx="538.3" cy="314.3" r="4.7"/><circle cx="549.7" cy="314.3" r="4.7"/></g>
<path d="M536.2 314.3h4.2M547.6 314.3h4.2M549.7 312.2v4.2" stroke="#fff" stroke-width="1"/>
<text x="531" y="325.3" font-size="3.6" font-weight="bold" fill="#fff" textLength="23.5" lengthAdjust="spacingAndGlyphs">ARDUINO</text>
<rect x="559.2" y="308.8" width="22" height="10.6" fill="none" stroke="#3f7dab" stroke-width="0.5"/>
<text x="560.4" y="318.4" font-size="10" fill="#fff" textLength="19.8" lengthAdjust="spacingAndGlyphs">UNO</text>
<circle cx="585.4" cy="318.6" r="2.9" fill="#3fd35f" opacity="0.45"/><circle cx="585.4" cy="318.6" r="1.8" fill="#6cf08a"/>
<text x="589.6" y="319.8" font-size="2.9" font-weight="bold" fill="#e8eef4">ON</text>
</g>
</svg>
  </div>
</div>
<div id="sbar"><span style="left:8px;color:#82b7e8">SERIAL MONITOR</span><span style="left:95px;color:#d8d8d8">CHIPS CONSOLE</span></div>
<div id="ser">
  <div style="top:-6.0px">Temperature: 25.37 °C</div>
  <div style="top:7.8px">Temperature: 25.37 °C</div>
  <div style="top:21.6px">Temperature: 25.37 °C</div>
  <div style="top:36.1px">Temperature: 25.37 °C</div>
  <div style="top:49.1px">Temperature: 25.37 °C</div>
  <div style="top:62.9px">Temperature: 25.37 °C</div>
  <svg class="a" style="left:413px;top:2px" width="10" height="74" viewBox="0 0 10 74"><path d="M4.500 4.800L7.200 2.200L9.900 4.800M4.500 69.500L7.200 72.100L9.900 69.500" stroke="#444" stroke-width="0.900" fill="none"/><rect x="2.600" y="53.500" width="8" height="11.500" fill="#c6c6c6"/></svg>
</div>
<div id="inp">
  <div class="a" style="left:0;top:0;width:362.500px;height:18.500px;background:#fff;border-top:1px solid #dcdcdc"></div>
  <div class="a" style="left:362.500px;top:0;width:1px;height:18.500px;background:#5a5a5a"></div>
  <div class="a" style="left:383.500px;top:0;width:1px;height:18.500px;background:#5a5a5a"></div>
  <div class="a" style="left:404px;top:0;width:1px;height:18.500px;background:#5a5a5a"></div>
  <svg class="a" style="left:366.500px;top:3.300px" width="13" height="12" viewBox="0 0 13 12"><path d="M1.300 0.600V10.600H12.600" stroke="#1a1a1a" stroke-width="1.300" fill="none"/><path d="M1.800 8.800L5.400 4.200L8.200 5.800L12 1.400" stroke="#1a1a1a" stroke-width="1.100" fill="none"/></svg>
  <div class="a" style="left:390.800px;top:4.700px;width:2.600px;height:7.600px;background:#111"></div>
  <div class="a" style="left:395px;top:4.700px;width:2.600px;height:7.600px;background:#111"></div>
  <svg class="a" style="left:409.500px;top:3.400px" width="10" height="11" viewBox="0 0 10 11"><path fill="#111" d="M3.300 0h3.400l.5.700H9.600V2.200H.4V.7H2.800zM1.100 3h7.800v6.800a1.200 1.200 0 0 1-1.200 1.200H2.300a1.200 1.200 0 0 1-1.200-1.200z"/><path d="M3.600 4.200v5M6.400 4.200v5" stroke="#e8e8e8" stroke-width="0.900"/></svg>
</div>
<div id="bot"><div class="a" style="left:0;top:0;width:426px;height:1px;background:#1e1e1e"></div><div class="a" style="left:781px;top:0;width:29px;height:2px;background:#111"></div><div class="a" style="left:824px;top:0;width:26px;height:2px;background:#111"></div></div>
</body>
</html>
